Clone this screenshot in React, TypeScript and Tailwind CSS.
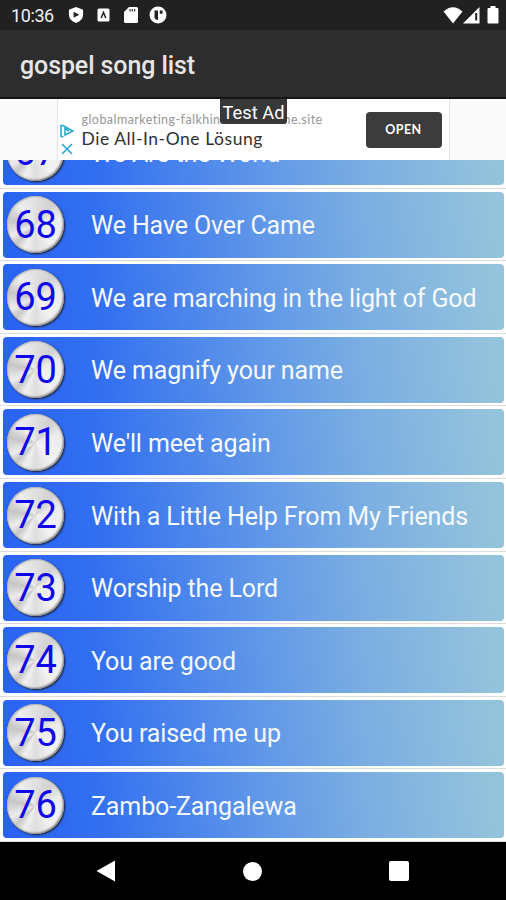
import React from 'react';

interface Song {
  id: number;
  title: string;
}

const songs: Song[] = [
  { id: 67, title: 'We Are the World' },
  { id: 68, title: 'We Have Over Came' },
  { id: 69, title: 'We are marching in the light of God' },
  { id: 70, title: 'We magnify your name' },
  { id: 71, title: "We'll meet again" },
  { id: 72, title: 'With a Little Help From My Friends' },
  { id: 73, title: 'Worship the Lord' },
  { id: 74, title: 'You are good' },
  { id: 75, title: 'You raised me up' },
  { id: 76, title: 'Zambo-Zangalewa' },
];

const StatusBar: React.FC = () => (
  <div className="h-[30px] shrink-0 bg-[#212121] flex items-center justify-between pl-[11px] pr-[7px] text-white">
    <div className="flex items-center">
      <span className="w-[57px] text-[18px] leading-none tracking-[-0.4px] pt-px text-[#f0f0f0]">10:36</span>
      <svg width="16" height="18" viewBox="0 0 17 18" className="mr-[13px]">
        <path d="M8.5 0.5 16 3.5v5.3c0 4.2-3.2 7.3-7.5 8.7C4.2 16.1 1 13 1 8.8V3.5z" fill="#fff" />
        <path d="M6 5.5V12l6-3.2z" fill="#212121" />
      </svg>
      <svg width="13" height="14" viewBox="0 0 13 14" className="mr-[14px]">
        <rect x="0.5" y="0.5" width="12" height="13" rx="1.5" fill="#fff" />
        <path d="M4.2 10 6.5 4.5 8.8 10" fill="none" stroke="#212121" strokeWidth="1.5" />
      </svg>
      <svg width="14" height="16" viewBox="0 0 14 16" className="mr-[11px]">
        <path d="M5 0h7.5Q14 0 14 1.5v13q0 1.5-1.5 1.5h-11Q0 16 0 14.5V5z" fill="#fff" />
        <path d="M6 2v2.5M8.3 2v2.5M10.6 2v2.5" stroke="#444" strokeWidth="1.3" />
      </svg>
      <svg width="18" height="18" viewBox="0 0 18 18">
        <circle cx="9" cy="9" r="8.5" fill="#fff" />
        <path d="M5.5 4.5H9V14q-3.5-.5-3.5-3zM10.8 4.5h2.7v3.2h-2.7z" fill="#212121" />
      </svg>
    </div>
    <div className="flex items-center">
      <svg width="20" height="17" viewBox="0 0 20 17">
        <path d="M0.5 4.5Q10-4 19.5 4.5L10 16.5z" fill="#fff" />
      </svg>
      <svg width="17" height="17" viewBox="0 0 17 17" className="mr-[7px]">
        <path d="M16.5 0v16.5H0z" fill="#fff" />
        <path d="M13.2 6v7.5" stroke="#212121" strokeWidth="2" />
      </svg>
      <svg width="12" height="18" viewBox="0 0 12 18">
        <path d="M3.5 0h5v2h2q1 0 1 1v13.5q0 1-1 1h-9q-1 0-1-1V3q0-1 1-1h2z" fill="#fff" />
      </svg>
    </div>
  </div>
);

const AdBanner: React.FC = () => (
  <div className="relative h-[61px] shrink-0 bg-[#fafafa] flex justify-center">
    <div className="w-[393px] bg-white border-x border-[#e4e4e4] flex items-center">
      <div className="w-[24px] flex flex-col items-center gap-[5px] pt-[20px] pr-[6px]">
        <svg width="14" height="14" viewBox="0 0 14 14" fill="none" stroke="#22a5cc" strokeWidth="1.5">
          <path d="M3.5 12.5H1V1.5H3L13 7 5 11V4.5L9 7" />
        </svg>
        <svg width="12" height="12" viewBox="0 0 12 12" stroke="#22a5cc" strokeWidth="1.5">
          <path d="M1 1l10 10M11 1L1 11" />
        </svg>
      </div>
      <div className="flex-1 font-['Lato',sans-serif] [font-variant-ligatures:none] whitespace-nowrap">
        <div className="flex text-[12.5px] leading-[17px] text-[#969696] tracking-[0.45px]">
          <span className="w-[202px]">globalmarketing-falkhin</span>
          <span>ne.site</span>
        </div>
        <div className="text-[17.5px] leading-[21px] text-[#303030] tracking-[0.55px]">Die All-In-One Lösung</div>
      </div>
      <button className="w-[76px] h-[36px] mr-[7px] rounded-[4px] bg-[#3c3c3c] text-white text-[12.5px] font-bold tracking-[0.4px] font-['Lato',sans-serif] pt-0.5">
        OPEN
      </button>
    </div>
    <div className="absolute top-0 left-[220px] w-[67px] h-[25px] rounded-b-[3px] bg-[#383838] text-white text-[18.3px] leading-[27px] text-center whitespace-nowrap">
      Test Ad
    </div>
  </div>
);

const SongRow: React.FC<{ song: Song }> = ({ song }) => (
  <div className="h-[72.6px] shrink-0 bg-white border-b border-[#dcdcdc] pt-[3px] pl-[3px] pr-[2px]">
    <div className="h-[66px] rounded-[4px] bg-linear-[82deg,#2862f3_0%,#3370f0_20%,#6198e8_52%,#7baee2_72%,#94c3dc_97%] flex items-center pl-[4px]">
      <div className="w-[57px] h-[57px] shrink-0 rounded-full bg-conic-[from_0deg,#e0e0e0,#d2d2d2_40deg,#ececec_70deg,#f2f2f2_140deg,#dedede_180deg,#f0f0f0_205deg,#c8c8c8_225deg,#ededed_245deg,#c6c6c6_280deg,#eeeeee_320deg,#e0e0e0] shadow-[inset_-1px_-1px_2px_#777,inset_1px_1px_1px_#bbb,1px_1px_2px_#1a1a1a] flex items-center justify-center text-[38px] leading-none text-[#1008e8]">
        {song.id}
      </div>
      <span className="ml-[27px] mt-[2px] text-[25px] tracking-[-0.12px] leading-none text-[#f6f9ff] whitespace-nowrap">{song.title}</span>
    </div>
  </div>
);

const NavBar: React.FC = () => (
  <div className="h-[58px] shrink-0 bg-black flex items-center justify-between pl-[96px] pr-[97px]">
    <svg width="20" height="22" viewBox="0 0 20 22" fill="#fff">
      <path d="M19 0.5v21L0.5 11z" />
    </svg>
    <div className="w-[19px] h-[19px] rounded-full bg-white" />
    <div className="w-[20px] h-[20px] rounded-[2px] bg-white" />
  </div>
);

const App: React.FC = () => {
  return (
    <div className="w-[506px] h-[900px] flex flex-col overflow-hidden bg-white font-['Roboto',sans-serif]">
      <StatusBar />
      <header className="h-[69px] shrink-0 bg-[#2d2d2d] border-b-2 border-[#151515] flex items-center pl-[20px]">
        <h1 className="text-[25px] tracking-[-0.1px] font-medium leading-none text-[#e6e6e6] pt-[4px]">gospel song list</h1>
      </header>
      <AdBanner />
      <div className="flex-1 min-h-0 overflow-hidden flex flex-col justify-end">
        {songs.map((song) => (
          <SongRow key={song.id} song={song} />
        ))}
      </div>
      <NavBar />
    </div>
  );
};

export default App;
